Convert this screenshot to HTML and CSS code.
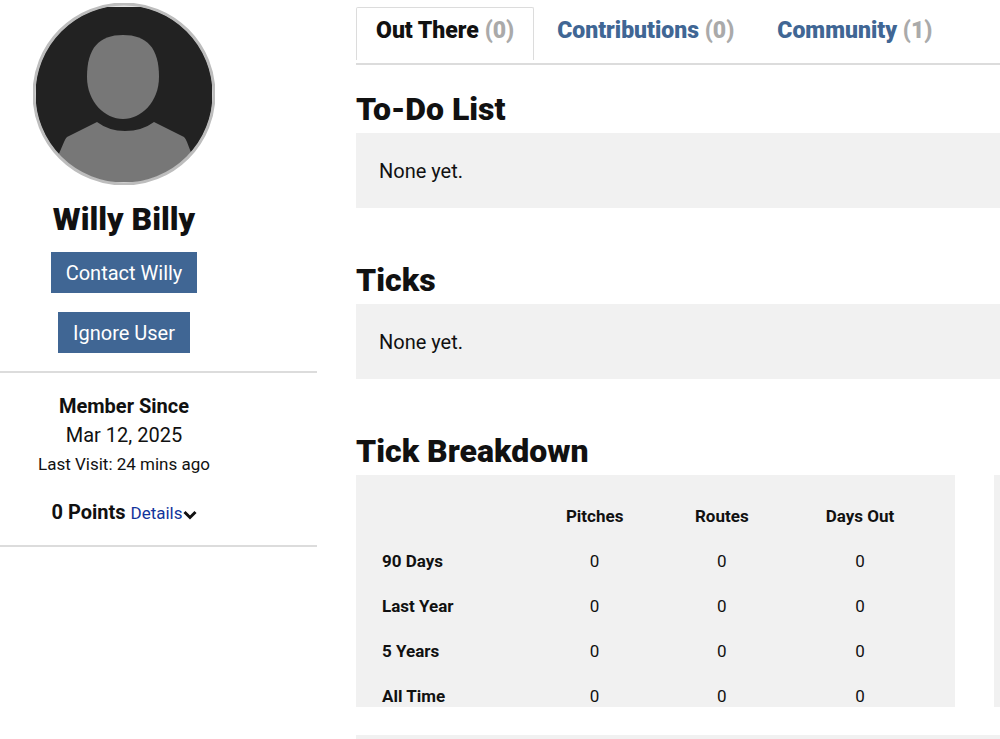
FILE: index.html
```html
<!DOCTYPE html>
<html lang="en">
<head>
  <meta charset="UTF-8" />
  <meta name="viewport" content="width=device-width, initial-scale=1.0"/>
  <title>Willy Billy</title>
  <link rel="stylesheet" href="styles.css">
</head>
<body>
  <div class="page">
    <aside class="sidebar">
      <section class="profile">
        <svg class="avatar" viewBox="0 0 182 182" aria-hidden="true">
          <defs>
            <clipPath id="avatarClip"><circle cx="91" cy="91" r="89" /></clipPath>
          </defs>
          <circle cx="91" cy="91" r="90" fill="#e4e4e4" />
          <g clip-path="url(#avatarClip)">
            <rect x="3" y="4" width="176" height="175" fill="#222" />
            <path fill="#777" d="M90 32C114 32 126 45 126 74C126 99 108 116 90 116C72 116 54 99 54 74C54 45 66 32 90 32Z" />
            <path fill="#777" d="M64 119Q76 128 92 128Q109 128 121 119L151 134Q153 136 154 139L162 160V179H22V160L31 139Q32 136 34 134Z" />
          </g>
          <circle cx="91" cy="91" r="90" fill="none" stroke="#bdbdbd" stroke-width="3" />
        </svg>
        <h1>Willy Billy</h1>
        <button type="button" class="btn">Contact Willy</button>
        <button type="button" class="btn">Ignore User</button>
      </section>

      <section class="member">
        <div><strong>Member Since</strong></div>
        <div>Mar 12, 2025</div>
        <div class="small">Last Visit: 24 mins ago</div>
        <div class="points">
          <strong>0 Points</strong>
          <a href="#" class="small">Details<svg class="chevron" viewBox="0 0 14 10" aria-hidden="true"><path d="M1.5 2L7 7.5L12.5 2" /></svg></a>
        </div>
      </section>
    </aside>

    <main class="content">
      <nav class="tabs">
        <a href="#" class="tab active">Out There <span>(0)</span></a>
        <a href="#" class="tab">Contributions <span>(0)</span></a>
        <a href="#" class="tab">Community <span>(1)</span></a>
      </nav>

      <section class="block">
        <h2>To-Do List</h2>
        <div class="panel">None yet.</div>
      </section>

      <section class="block">
        <h2>Ticks</h2>
        <div class="panel">None yet.</div>
      </section>

      <section class="block">
        <h2>Tick Breakdown</h2>
        <div class="cards">
          <div class="card">
            <table>
              <thead>
                <tr>
                  <td></td>
                  <th scope="col">Pitches</th>
                  <th scope="col">Routes</th>
                  <th scope="col">Days Out</th>
                </tr>
              </thead>
              <tbody>
                <tr><th scope="row">90 Days</th><td>0</td><td>0</td><td>0</td></tr>
                <tr><th scope="row">Last Year</th><td>0</td><td>0</td><td>0</td></tr>
                <tr><th scope="row">5 Years</th><td>0</td><td>0</td><td>0</td></tr>
                <tr><th scope="row">All Time</th><td>0</td><td>0</td><td>0</td></tr>
              </tbody>
            </table>
          </div>
          <div class="card-next"></div>
        </div>
        <div class="card-strip"></div>
      </section>
    </main>
  </div>
</body>
</html>
```
FILE: styles.css
```css
* {
  box-sizing: border-box;
}

body {
  margin: 0;
  background: white;
  color: #111;
  font-family: Roboto, "Liberation Sans", sans-serif;
  font-size: 20px;
  line-height: 29px;
}

h1,
h2 {
  margin: 0;
  font-size: 32px;
  line-height: 36px;
  font-weight: 900;
}

.page {
  display: flex;
  gap: 39px;
}

/* sidebar */
.sidebar {
  flex: 0 0 317px;
}

.profile,
.member {
  display: flex;
  flex-direction: column;
  align-items: center;
  padding-right: 69px;
  border-bottom: 2px solid #dcdcdc;
}

.profile {
  padding-top: 3px;
  padding-bottom: 18px;
}

.avatar {
  width: 182px;
  height: 182px;
}

.profile h1 {
  margin: 16px 0 15px;
}

.btn {
  height: 41px;
  padding: 1px 15px 0;
  border: none;
  background: #406694;
  color: white;
  font: inherit;
  cursor: pointer;
}

.btn + .btn {
  margin-top: 19px;
}

.member {
  padding-top: 19px;
  padding-bottom: 17px;
}

.small {
  font-size: 17px;
}

.points {
  margin-top: 19px;
}

.points a {
  color: #11349b;
  text-decoration: none;
}

.chevron {
  width: 14px;
  height: 10px;
  vertical-align: -1px;
  fill: none;
  stroke: #111;
  stroke-width: 3;
}

/* main column */
.content {
  flex: 1;
  min-width: 0;
}

.tabs {
  display: flex;
  gap: 3px;
  padding: 7px 0 3px;
  border-bottom: 2px solid #dcdcdc;
}

.tab {
  height: 53px;
  padding: 0 19px;
  border: 1px solid transparent;
  border-bottom: none;
  border-radius: 2px 2px 0 0;
  color: #406694;
  font-size: 23px;
  line-height: 46px;
  font-weight: 900;
  text-decoration: none;
  white-space: nowrap;
}

.tab.active {
  border-color: #dcdcdc;
  color: #111;
}

.tab span {
  color: #aaa;
}

.block {
  margin-top: 54px;
}

.tabs + .block {
  margin-top: 26px;
}

.block h2 {
  margin-bottom: 6px;
}

.panel,
.card,
.card-next,
.card-strip {
  background: #f1f1f1;
}

.panel {
  padding: 24px 23px 22px;
}

.cards {
  display: flex;
  gap: 39px;
}

.card {
  flex: 0 0 93%;
  padding: 19px 23px 0;
}

.card-next {
  flex: 1;
}

.card-strip {
  height: 4px;
  margin-top: 28px;
}

table {
  width: 100%;
  table-layout: fixed;
  border-collapse: collapse;
  font-size: 17px;
  line-height: 22px;
  text-align: center;
}

th,
td {
  width: 24%;
  padding: 11px 0 12px;
}

th:nth-child(2) {
  width: 22%;
}

th:nth-child(4) {
  width: 26%;
}

td:first-child {
  width: 28%;
}

tbody th {
  padding-left: 3px;
  text-align: left;
}

tbody tr:last-child > * {
  padding-bottom: 0;
}
```
